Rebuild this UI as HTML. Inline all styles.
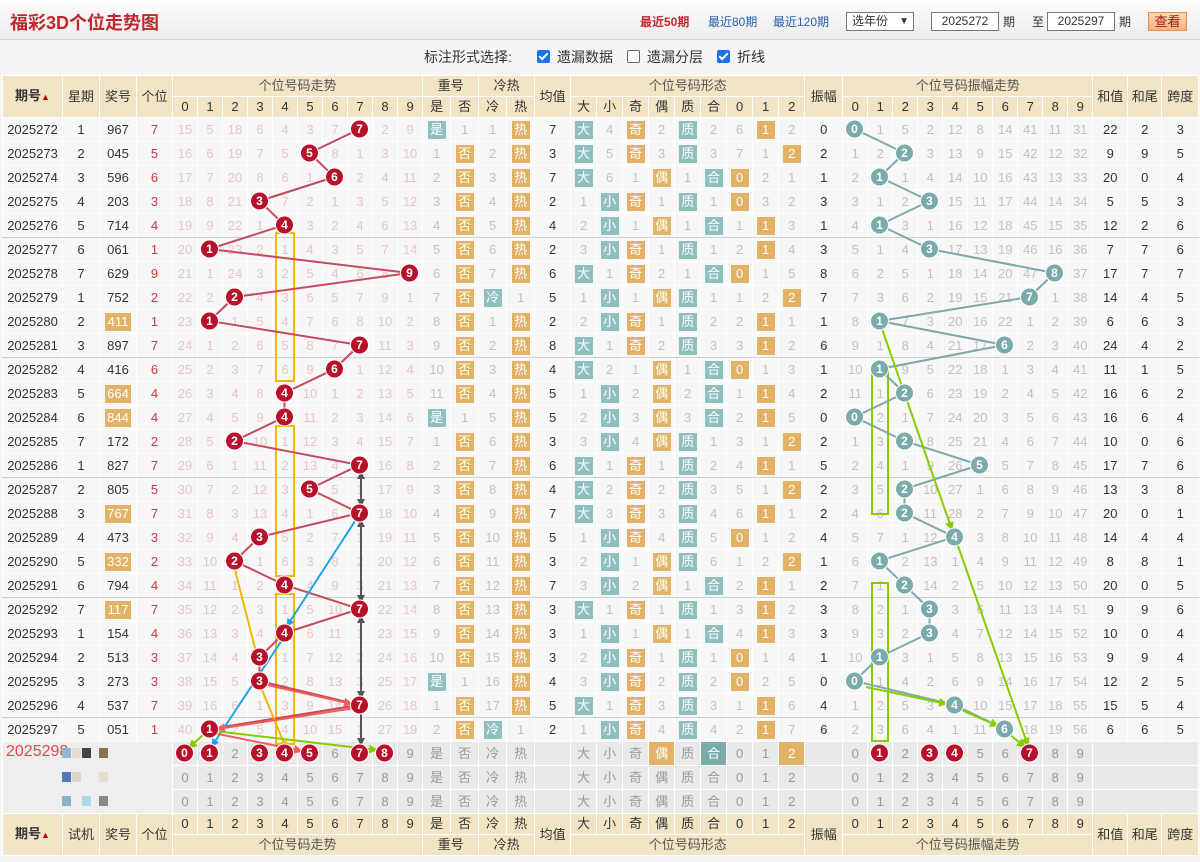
<!DOCTYPE html>
<html><head><meta charset="utf-8">
<style>
*{margin:0;padding:0;box-sizing:border-box}
body{width:1200px;height:862px;overflow:hidden;background:#f5f5f5;font-family:"Liberation Sans","Noto Sans CJK SC",sans-serif;font-size:13px;color:#333;position:relative}
#top{position:absolute;left:0;top:0;width:1200px;height:40px;background:linear-gradient(#fdfdfd,#ececec);border-bottom:1px solid #d8d8d8}
#top h1{position:absolute;left:10px;top:9px;font-size:18px;color:#c0272d;font-weight:bold}
.lk{position:absolute;top:13px;font-size:12px;color:#2a5ca8}
.box{position:absolute;top:12px;height:19px;border:1px solid #777;background:#fff;font-size:12px;line-height:17px;text-align:center}
#opt{position:absolute;top:47px;font-size:14px;color:#333}
.cb{position:absolute;top:50px;width:13px;height:13px;border-radius:2px}
.cb.on{background:#1a73e8}
.cb.on:after{content:"";position:absolute;left:4px;top:1px;width:3px;height:7px;border:solid #fff;border-width:0 2px 2px 0;transform:rotate(45deg)}
.cb.off{border:1px solid #666;background:#fff}
table{position:absolute;left:2px;top:75px;border-collapse:collapse;table-layout:fixed;width:1196px}
td{border:1px solid #fff;text-align:center;padding:0;white-space:nowrap;overflow:hidden;background:#f7f7f7;line-height:14px}
tr.h td{background:#f2e5c6;color:#333}
tr.h1{height:21px}tr.h2{height:21px}
tr.d{height:24px}
tr.d td{color:#c2c2c2}
tr.d td:nth-child(-n+3){color:#333}
tr.d td:nth-child(4){color:#c83a3a}
tr.d td:nth-child(n+5):nth-child(-n+14){color:#e8c6c6}
tr.d td:nth-child(19),tr.d td:nth-child(29),tr.d td:nth-child(n+40){color:#333}
tr.d td:nth-child(5),tr.d td:nth-child(15),tr.d td:nth-child(19),tr.d td:nth-child(20),tr.d td:nth-child(29),tr.d td:nth-child(30),tr.d td:nth-child(40){border-left:1px solid #dcdcdc}
tr.s td{border-bottom:1px solid #cfcfcf}
tr.p{height:24px}
tr.p td{background:#e9e9e9;color:#9a9a9a}
b{font-weight:normal;display:inline-block;color:#fff;height:18px;line-height:18px}
b.t{background:#8fbfbf;width:18px}
b.o{background:#e2b266;width:18px}
b.w{background:#e2b266;width:26px}
td.k{background:#7aabab!important;color:#fff!important}
td.y{background:#e2b266!important;color:#fff!important}
.sq{position:absolute;width:9px;height:10px}
</style></head><body>
<div id="top"><h1>福彩3D个位走势图</h1>
<span class="lk" style="left:640px;color:#c0272d;font-weight:bold">最近50期</span>
<span class="lk" style="left:708px">最近80期</span>
<span class="lk" style="left:773px">最近120期</span>
<div class="box" style="left:846px;width:68px;text-align:left;padding-left:5px">选年份 <span style="position:absolute;right:4px;font-size:10px">&#9660;</span></div>
<div class="box" style="left:931px;width:68px">2025272</div>
<span class="lk" style="left:1003px;color:#333">期</span>
<span class="lk" style="left:1032px;color:#333">至</span>
<div class="box" style="left:1047px;width:68px">2025297</div>
<span class="lk" style="left:1119px;color:#333">期</span>
<div class="box" style="left:1148px;width:39px;border-color:#e0905a;background:linear-gradient(#ffd9b0,#f7b27a);color:#a01818;font-size:13px">查看</div>
</div>
<span id="opt" style="left:424px">标注形式选择:</span>
<span class="cb on" style="left:537px"></span><span id="opt" style="left:557px">遗漏数据</span>
<span class="cb off" style="left:627px"></span><span id="opt" style="left:647px">遗漏分层</span>
<span class="cb on" style="left:717px"></span><span id="opt" style="left:737px">折线</span>

<table>
<colgroup><col style="width:60px"><col style="width:37px"><col style="width:37px"><col style="width:36px">
<col style="width:25px"><col style="width:25px"><col style="width:25px"><col style="width:25px"><col style="width:25px"><col style="width:25px"><col style="width:25px"><col style="width:25px"><col style="width:25px"><col style="width:25px">
<col style="width:28px"><col style="width:28px"><col style="width:28px"><col style="width:28px"><col style="width:36px">
<col style="width:26px"><col style="width:26px"><col style="width:26px"><col style="width:26px"><col style="width:26px"><col style="width:26px"><col style="width:26px"><col style="width:26px"><col style="width:26px">
<col style="width:38px">
<col style="width:25px"><col style="width:25px"><col style="width:25px"><col style="width:25px"><col style="width:25px"><col style="width:25px"><col style="width:25px"><col style="width:25px"><col style="width:25px"><col style="width:25px">
<col style="width:35px"><col style="width:34px"><col style="width:37px"></colgroup>
<tr class="h h1"><td rowspan="2"><span style="font-weight:bold">期号</span><span style="font-size:9px;color:#b00">&#9650;</span></td><td rowspan="2">星期</td><td rowspan="2">奖号</td><td rowspan="2">个位</td><td colspan="10" style="color:#555">个位号码走势</td><td colspan="2">重号</td><td colspan="2">冷热</td><td rowspan="2">均值</td><td colspan="9" style="color:#555">个位号码形态</td><td rowspan="2">振幅</td><td colspan="10" style="color:#555">个位号码振幅走势</td><td rowspan="2">和值</td><td rowspan="2">和尾</td><td rowspan="2">跨度</td></tr>
<tr class="h h2"><td>0<td>1<td>2<td>3<td>4<td>5<td>6<td>7<td>8<td>9<td>是<td>否<td>冷<td>热<td>大<td>小<td>奇<td>偶<td>质<td>合<td>0<td>1<td>2<td>0<td>1<td>2<td>3<td>4<td>5<td>6<td>7<td>8<td>9</tr>

<tr class="d"><td>2025272<td>1<td>967<td>7<td>15<td>5<td>18<td>6<td>4<td>3<td>7<td><td>2<td>9<td><b class=t>是</b><td>1<td>1<td><b class=o>热</b><td>7<td><b class=t>大</b><td>4<td><b class=o>奇</b><td>2<td><b class=t>质</b><td>2<td>6<td><b class=o>1</b><td>2<td>0<td><td>1<td>5<td>2<td>12<td>8<td>14<td>41<td>11<td>31<td>22<td>2<td>3</tr>
<tr class="d"><td>2025273<td>2<td>045<td>5<td>16<td>6<td>19<td>7<td>5<td><td>8<td>1<td>3<td>10<td>1<td><b class=o>否</b><td>2<td><b class=o>热</b><td>3<td><b class=t>大</b><td>5<td><b class=o>奇</b><td>3<td><b class=t>质</b><td>3<td>7<td>1<td><b class=o>2</b><td>2<td>1<td>2<td><td>3<td>13<td>9<td>15<td>42<td>12<td>32<td>9<td>9<td>5</tr>
<tr class="d"><td>2025274<td>3<td>596<td>6<td>17<td>7<td>20<td>8<td>6<td>1<td><td>2<td>4<td>11<td>2<td><b class=o>否</b><td>3<td><b class=o>热</b><td>7<td><b class=t>大</b><td>6<td>1<td><b class=o>偶</b><td>1<td><b class=t>合</b><td><b class=o>0</b><td>2<td>1<td>1<td>2<td><td>1<td>4<td>14<td>10<td>16<td>43<td>13<td>33<td>20<td>0<td>4</tr>
<tr class="d"><td>2025275<td>4<td>203<td>3<td>18<td>8<td>21<td><td>7<td>2<td>1<td>3<td>5<td>12<td>3<td><b class=o>否</b><td>4<td><b class=o>热</b><td>2<td>1<td><b class=t>小</b><td><b class=o>奇</b><td>1<td><b class=t>质</b><td>1<td><b class=o>0</b><td>3<td>2<td>3<td>3<td>1<td>2<td><td>15<td>11<td>17<td>44<td>14<td>34<td>5<td>5<td>3</tr>
<tr class="d s"><td>2025276<td>5<td>714<td>4<td>19<td>9<td>22<td>1<td><td>3<td>2<td>4<td>6<td>13<td>4<td><b class=o>否</b><td>5<td><b class=o>热</b><td>4<td>2<td><b class=t>小</b><td>1<td><b class=o>偶</b><td>1<td><b class=t>合</b><td>1<td><b class=o>1</b><td>3<td>1<td>4<td><td>3<td>1<td>16<td>12<td>18<td>45<td>15<td>35<td>12<td>2<td>6</tr>
<tr class="d"><td>2025277<td>6<td>061<td>1<td>20<td><td>23<td>2<td>1<td>4<td>3<td>5<td>7<td>14<td>5<td><b class=o>否</b><td>6<td><b class=o>热</b><td>2<td>3<td><b class=t>小</b><td><b class=o>奇</b><td>1<td><b class=t>质</b><td>1<td>2<td><b class=o>1</b><td>4<td>3<td>5<td>1<td>4<td><td>17<td>13<td>19<td>46<td>16<td>36<td>7<td>7<td>6</tr>
<tr class="d"><td>2025278<td>7<td>629<td>9<td>21<td>1<td>24<td>3<td>2<td>5<td>4<td>6<td>8<td><td>6<td><b class=o>否</b><td>7<td><b class=o>热</b><td>6<td><b class=t>大</b><td>1<td><b class=o>奇</b><td>2<td>1<td><b class=t>合</b><td><b class=o>0</b><td>1<td>5<td>8<td>6<td>2<td>5<td>1<td>18<td>14<td>20<td>47<td><td>37<td>17<td>7<td>7</tr>
<tr class="d"><td>2025279<td>1<td>752<td>2<td>22<td>2<td><td>4<td>3<td>6<td>5<td>7<td>9<td>1<td>7<td><b class=o>否</b><td><b class=t>冷</b><td>1<td>5<td>1<td><b class=t>小</b><td>1<td><b class=o>偶</b><td><b class=t>质</b><td>1<td>1<td>2<td><b class=o>2</b><td>7<td>7<td>3<td>6<td>2<td>19<td>15<td>21<td><td>1<td>38<td>14<td>4<td>5</tr>
<tr class="d"><td>2025280<td>2<td><b class=w>411</b><td>1<td>23<td><td>1<td>5<td>4<td>7<td>6<td>8<td>10<td>2<td>8<td><b class=o>否</b><td>1<td><b class=o>热</b><td>2<td>2<td><b class=t>小</b><td><b class=o>奇</b><td>1<td><b class=t>质</b><td>2<td>2<td><b class=o>1</b><td>1<td>1<td>8<td><td>7<td>3<td>20<td>16<td>22<td>1<td>2<td>39<td>6<td>6<td>3</tr>
<tr class="d s"><td>2025281<td>3<td>897<td>7<td>24<td>1<td>2<td>6<td>5<td>8<td>7<td><td>11<td>3<td>9<td><b class=o>否</b><td>2<td><b class=o>热</b><td>8<td><b class=t>大</b><td>1<td><b class=o>奇</b><td>2<td><b class=t>质</b><td>3<td>3<td><b class=o>1</b><td>2<td>6<td>9<td>1<td>8<td>4<td>21<td>17<td><td>2<td>3<td>40<td>24<td>4<td>2</tr>
<tr class="d"><td>2025282<td>4<td>416<td>6<td>25<td>2<td>3<td>7<td>6<td>9<td><td>1<td>12<td>4<td>10<td><b class=o>否</b><td>3<td><b class=o>热</b><td>4<td><b class=t>大</b><td>2<td>1<td><b class=o>偶</b><td>1<td><b class=t>合</b><td><b class=o>0</b><td>1<td>3<td>1<td>10<td><td>9<td>5<td>22<td>18<td>1<td>3<td>4<td>41<td>11<td>1<td>5</tr>
<tr class="d"><td>2025283<td>5<td><b class=w>664</b><td>4<td>26<td>3<td>4<td>8<td><td>10<td>1<td>2<td>13<td>5<td>11<td><b class=o>否</b><td>4<td><b class=o>热</b><td>5<td>1<td><b class=t>小</b><td>2<td><b class=o>偶</b><td>2<td><b class=t>合</b><td>1<td><b class=o>1</b><td>4<td>2<td>11<td>1<td><td>6<td>23<td>19<td>2<td>4<td>5<td>42<td>16<td>6<td>2</tr>
<tr class="d"><td>2025284<td>6<td><b class=w>844</b><td>4<td>27<td>4<td>5<td>9<td><td>11<td>2<td>3<td>14<td>6<td><b class=t>是</b><td>1<td>5<td><b class=o>热</b><td>5<td>2<td><b class=t>小</b><td>3<td><b class=o>偶</b><td>3<td><b class=t>合</b><td>2<td><b class=o>1</b><td>5<td>0<td><td>2<td>1<td>7<td>24<td>20<td>3<td>5<td>6<td>43<td>16<td>6<td>4</tr>
<tr class="d"><td>2025285<td>7<td>172<td>2<td>28<td>5<td><td>10<td>1<td>12<td>3<td>4<td>15<td>7<td>1<td><b class=o>否</b><td>6<td><b class=o>热</b><td>3<td>3<td><b class=t>小</b><td>4<td><b class=o>偶</b><td><b class=t>质</b><td>1<td>3<td>1<td><b class=o>2</b><td>2<td>1<td>3<td><td>8<td>25<td>21<td>4<td>6<td>7<td>44<td>10<td>0<td>6</tr>
<tr class="d s"><td>2025286<td>1<td>827<td>7<td>29<td>6<td>1<td>11<td>2<td>13<td>4<td><td>16<td>8<td>2<td><b class=o>否</b><td>7<td><b class=o>热</b><td>6<td><b class=t>大</b><td>1<td><b class=o>奇</b><td>1<td><b class=t>质</b><td>2<td>4<td><b class=o>1</b><td>1<td>5<td>2<td>4<td>1<td>9<td>26<td><td>5<td>7<td>8<td>45<td>17<td>7<td>6</tr>
<tr class="d"><td>2025287<td>2<td>805<td>5<td>30<td>7<td>2<td>12<td>3<td><td>5<td>1<td>17<td>9<td>3<td><b class=o>否</b><td>8<td><b class=o>热</b><td>4<td><b class=t>大</b><td>2<td><b class=o>奇</b><td>2<td><b class=t>质</b><td>3<td>5<td>1<td><b class=o>2</b><td>2<td>3<td>5<td><td>10<td>27<td>1<td>6<td>8<td>9<td>46<td>13<td>3<td>8</tr>
<tr class="d"><td>2025288<td>3<td><b class=w>767</b><td>7<td>31<td>8<td>3<td>13<td>4<td>1<td>6<td><td>18<td>10<td>4<td><b class=o>否</b><td>9<td><b class=o>热</b><td>7<td><b class=t>大</b><td>3<td><b class=o>奇</b><td>3<td><b class=t>质</b><td>4<td>6<td><b class=o>1</b><td>1<td>2<td>4<td>6<td><td>11<td>28<td>2<td>7<td>9<td>10<td>47<td>20<td>0<td>1</tr>
<tr class="d"><td>2025289<td>4<td>473<td>3<td>32<td>9<td>4<td><td>5<td>2<td>7<td>1<td>19<td>11<td>5<td><b class=o>否</b><td>10<td><b class=o>热</b><td>5<td>1<td><b class=t>小</b><td><b class=o>奇</b><td>4<td><b class=t>质</b><td>5<td><b class=o>0</b><td>1<td>2<td>4<td>5<td>7<td>1<td>12<td><td>3<td>8<td>10<td>11<td>48<td>14<td>4<td>4</tr>
<tr class="d"><td>2025290<td>5<td><b class=w>332</b><td>2<td>33<td>10<td><td>1<td>6<td>3<td>8<td>2<td>20<td>12<td>6<td><b class=o>否</b><td>11<td><b class=o>热</b><td>3<td>2<td><b class=t>小</b><td>1<td><b class=o>偶</b><td><b class=t>质</b><td>6<td>1<td>2<td><b class=o>2</b><td>1<td>6<td><td>2<td>13<td>1<td>4<td>9<td>11<td>12<td>49<td>8<td>8<td>1</tr>
<tr class="d s"><td>2025291<td>6<td>794<td>4<td>34<td>11<td>1<td>2<td><td>4<td>9<td>3<td>21<td>13<td>7<td><b class=o>否</b><td>12<td><b class=o>热</b><td>7<td>3<td><b class=t>小</b><td>2<td><b class=o>偶</b><td>1<td><b class=t>合</b><td>2<td><b class=o>1</b><td>1<td>2<td>7<td>1<td><td>14<td>2<td>5<td>10<td>12<td>13<td>50<td>20<td>0<td>5</tr>
<tr class="d"><td>2025292<td>7<td><b class=w>117</b><td>7<td>35<td>12<td>2<td>3<td>1<td>5<td>10<td><td>22<td>14<td>8<td><b class=o>否</b><td>13<td><b class=o>热</b><td>3<td><b class=t>大</b><td>1<td><b class=o>奇</b><td>1<td><b class=t>质</b><td>1<td>3<td><b class=o>1</b><td>2<td>3<td>8<td>2<td>1<td><td>3<td>6<td>11<td>13<td>14<td>51<td>9<td>9<td>6</tr>
<tr class="d"><td>2025293<td>1<td>154<td>4<td>36<td>13<td>3<td>4<td><td>6<td>11<td>1<td>23<td>15<td>9<td><b class=o>否</b><td>14<td><b class=o>热</b><td>3<td>1<td><b class=t>小</b><td>1<td><b class=o>偶</b><td>1<td><b class=t>合</b><td>4<td><b class=o>1</b><td>3<td>3<td>9<td>3<td>2<td><td>4<td>7<td>12<td>14<td>15<td>52<td>10<td>0<td>4</tr>
<tr class="d"><td>2025294<td>2<td>513<td>3<td>37<td>14<td>4<td><td>1<td>7<td>12<td>2<td>24<td>16<td>10<td><b class=o>否</b><td>15<td><b class=o>热</b><td>3<td>2<td><b class=t>小</b><td><b class=o>奇</b><td>1<td><b class=t>质</b><td>1<td><b class=o>0</b><td>1<td>4<td>1<td>10<td><td>3<td>1<td>5<td>8<td>13<td>15<td>16<td>53<td>9<td>9<td>4</tr>
<tr class="d"><td>2025295<td>3<td>273<td>3<td>38<td>15<td>5<td><td>2<td>8<td>13<td>3<td>25<td>17<td><b class=t>是</b><td>1<td>16<td><b class=o>热</b><td>4<td>3<td><b class=t>小</b><td><b class=o>奇</b><td>2<td><b class=t>质</b><td>2<td><b class=o>0</b><td>2<td>5<td>0<td><td>1<td>4<td>2<td>6<td>9<td>14<td>16<td>17<td>54<td>12<td>2<td>5</tr>
<tr class="d s"><td>2025296<td>4<td>537<td>7<td>39<td>16<td>6<td>1<td>3<td>9<td>14<td><td>26<td>18<td>1<td><b class=o>否</b><td>17<td><b class=o>热</b><td>5<td><b class=t>大</b><td>1<td><b class=o>奇</b><td>3<td><b class=t>质</b><td>3<td>1<td><b class=o>1</b><td>6<td>4<td>1<td>2<td>5<td>3<td><td>10<td>15<td>17<td>18<td>55<td>15<td>5<td>4</tr>
<tr class="d"><td>2025297<td>5<td>051<td>1<td>40<td><td>2<td>5<td>4<td>10<td>15<td>1<td>27<td>19<td>2<td><b class=o>否</b><td><b class=t>冷</b><td>1<td>2<td>1<td><b class=t>小</b><td><b class=o>奇</b><td>4<td><b class=t>质</b><td>4<td>2<td><b class=o>1</b><td>7<td>6<td>2<td>3<td>6<td>4<td>1<td>11<td><td>18<td>19<td>56<td>6<td>6<td>5</tr>

<tr class="p"><td colspan="4" rowspan="3" style="background:#eeeeee;vertical-align:top;text-align:left;position:relative"><span style="position:absolute;left:3px;top:3px;font-size:16px;color:#e8474f">2025298</span></td><td><td><td>2<td><td><td><td>6<td><td><td>9<td>是<td>否<td>冷<td>热<td><td>大<td>小<td>奇<td class="y">偶<td>质<td class="k">合<td>0<td>1<td class="y">2<td><td>0<td><td>2<td><td><td>5<td>6<td><td>8<td>9<td colspan="3"></tr>
<tr class="p"><td>0<td>1<td>2<td>3<td>4<td>5<td>6<td>7<td>8<td>9<td>是<td>否<td>冷<td>热<td><td>大<td>小<td>奇<td>偶<td>质<td>合<td>0<td>1<td>2<td><td>0<td>1<td>2<td>3<td>4<td>5<td>6<td>7<td>8<td>9<td colspan="3"></tr>
<tr class="p"><td>0<td>1<td>2<td>3<td>4<td>5<td>6<td>7<td>8<td>9<td>是<td>否<td>冷<td>热<td><td>大<td>小<td>奇<td>偶<td>质<td>合<td>0<td>1<td>2<td><td>0<td>1<td>2<td>3<td>4<td>5<td>6<td>7<td>8<td>9<td colspan="3"></tr>

<tr class="h h1"><td rowspan="2"><span style="font-weight:bold">期号</span><span style="font-size:9px;color:#b00">&#9650;</span></td><td rowspan="2">试机</td><td rowspan="2">奖号</td><td rowspan="2">个位</td><td>0<td>1<td>2<td>3<td>4<td>5<td>6<td>7<td>8<td>9<td>是<td>否<td>冷<td>热<td rowspan="2">均值</td><td>大<td>小<td>奇<td>偶<td>质<td>合<td>0<td>1<td>2<td rowspan="2">振幅</td><td>0<td>1<td>2<td>3<td>4<td>5<td>6<td>7<td>8<td>9<td rowspan="2">和值</td><td rowspan="2">和尾</td><td rowspan="2">跨度</td></tr>
<tr class="h h2"><td colspan="10" style="color:#555">个位号码走势</td><td colspan="2">重号</td><td colspan="2">冷热</td><td colspan="9" style="color:#555">个位号码形态</td><td colspan="10" style="color:#555">个位号码振幅走势</td></tr>
</table>

<div class="sq" style="left:62px;top:748px;background:#8cb8d8"></div><div class="sq" style="left:72px;top:748px;background:#e6ddd2"></div><div class="sq" style="left:82px;top:748px;background:#444"></div><div class="sq" style="left:99px;top:748px;background:#8b7150"></div>
<div class="sq" style="left:62px;top:772px;background:#4f7cb5"></div><div class="sq" style="left:72px;top:772px;background:#e0d5cc"></div><div class="sq" style="left:99px;top:772px;background:#e6ddd2"></div>
<div class="sq" style="left:62px;top:796px;background:#86b4c8"></div><div class="sq" style="left:72px;top:796px;background:#eee"></div><div class="sq" style="left:82px;top:796px;background:#acdbe4"></div><div class="sq" style="left:99px;top:796px;background:#888"></div>

<svg width="1200" height="862" style="position:absolute;left:0;top:0" font-family="Liberation Sans,sans-serif">
<defs>
<marker id="ay" markerWidth="8" markerHeight="8" refX="7" refY="4" orient="auto" markerUnits="userSpaceOnUse"><path d="M0,0 L8,4 L0,8 Z" fill="#f5b800"/></marker>
<marker id="ab" markerWidth="8" markerHeight="8" refX="7" refY="4" orient="auto" markerUnits="userSpaceOnUse"><path d="M0,0 L8,4 L0,8 Z" fill="#19a4ec"/></marker>
<marker id="ak" markerWidth="8" markerHeight="8" refX="7" refY="4" orient="auto-start-reverse" markerUnits="userSpaceOnUse"><path d="M0,0 L8,4 L0,8 Z" fill="#555"/></marker>
<marker id="ar" markerWidth="9" markerHeight="9" refX="8" refY="4.5" orient="auto" markerUnits="userSpaceOnUse"><path d="M0,0 L9,4.5 L0,9 Z" fill="#f25c5c"/></marker>
<marker id="ag" markerWidth="9" markerHeight="9" refX="8" refY="4.5" orient="auto" markerUnits="userSpaceOnUse"><path d="M0,0 L9,4.5 L0,9 Z" fill="#88cc00"/></marker>
</defs>
<g fill="none" stroke="#f5b800" stroke-width="2">
<rect x="276" y="233" width="18" height="148"/><rect x="276" y="426" width="18" height="150"/><rect x="276" y="594" width="18" height="150"/>
</g>
<g fill="none" stroke="#88cc00" stroke-width="2">
<rect x="872" y="366" width="16" height="148"/><rect x="872" y="583" width="16" height="158"/>
</g>
<polyline fill="none" stroke="#c84a5c" stroke-width="2" points="359.5,129 309.5,153 334.5,177 259.5,201 284.5,225 209.5,249 409.5,273 234.5,297 209.5,321 359.5,345 334.5,369 284.5,393 284.5,417 234.5,441 359.5,465 309.5,489 359.5,513 259.5,537 234.5,561 284.5,585 359.5,609 284.5,633 259.5,657 259.5,681 359.5,705 209.5,729"/>
<polyline fill="none" stroke="#7fa9a9" stroke-width="2" points="854.5,129 904.5,153 879.5,177 929.5,201 879.5,225 929.5,249 1054.5,273 1029.5,297 879.5,321 1004.5,345 879.5,369 904.5,393 854.5,417 904.5,441 979.5,465 904.5,489 904.5,513 954.5,537 879.5,561 904.5,585 929.5,609 929.5,633 879.5,657 854.5,681 954.5,705 1004.5,729"/>
<g stroke-width="2" fill="none">
<line x1="234" y1="566" x2="257" y2="656" stroke="#f5b800" marker-end="url(#ay)"/>
<line x1="262" y1="690" x2="286" y2="748" stroke="#f5b800" marker-end="url(#ay)"/>
<line x1="357" y1="518" x2="287" y2="626" stroke="#19a4ec" marker-end="url(#ab)"/>
<line x1="282" y1="640" x2="212" y2="746" stroke="#19a4ec" marker-end="url(#ab)"/>
<line x1="361" y1="472" x2="361" y2="506" stroke="#555" marker-start="url(#ak)" marker-end="url(#ak)"/>
<line x1="361" y1="520" x2="361" y2="602" stroke="#555" marker-start="url(#ak)" marker-end="url(#ak)"/>
<line x1="361" y1="616" x2="361" y2="698" stroke="#555" marker-start="url(#ak)" marker-end="url(#ak)"/>
<line x1="361" y1="712" x2="361" y2="745" stroke="#555" marker-end="url(#ak)"/>
<line x1="263" y1="684" x2="352" y2="704" stroke="#f25c5c" marker-end="url(#ar)"/>
<line x1="355" y1="708" x2="217" y2="729" stroke="#f25c5c" marker-end="url(#ar)"/>
<line x1="213" y1="733" x2="302" y2="751" stroke="#f25c5c" marker-end="url(#ar)"/>
<line x1="205" y1="733" x2="189" y2="748" stroke="#88cc00" marker-end="url(#ag)"/>
<line x1="214" y1="731" x2="377" y2="750" stroke="#88cc00" marker-end="url(#ag)"/>
<line x1="881" y1="326" x2="952" y2="530" stroke="#88cc00" marker-end="url(#ag)"/>
<line x1="957" y1="543" x2="1028" y2="746" stroke="#88cc00" marker-end="url(#ag)"/>
<line x1="866" y1="687" x2="947" y2="704" stroke="#88cc00" marker-end="url(#ag)"/>
<line x1="959" y1="709" x2="998" y2="726" stroke="#88cc00" marker-end="url(#ag)"/>
<line x1="1009" y1="734" x2="1025" y2="747" stroke="#88cc00" marker-end="url(#ag)"/>
</g>
<g fill="#b8102a" stroke="#fff" stroke-width="1">
<circle cx="359.5" cy="129" r="9"/><circle cx="309.5" cy="153" r="9"/><circle cx="334.5" cy="177" r="9"/><circle cx="259.5" cy="201" r="9"/><circle cx="284.5" cy="225" r="9"/><circle cx="209.5" cy="249" r="9"/><circle cx="409.5" cy="273" r="9"/><circle cx="234.5" cy="297" r="9"/><circle cx="209.5" cy="321" r="9"/><circle cx="359.5" cy="345" r="9"/><circle cx="334.5" cy="369" r="9"/><circle cx="284.5" cy="393" r="9"/><circle cx="284.5" cy="417" r="9"/><circle cx="234.5" cy="441" r="9"/><circle cx="359.5" cy="465" r="9"/><circle cx="309.5" cy="489" r="9"/><circle cx="359.5" cy="513" r="9"/><circle cx="259.5" cy="537" r="9"/><circle cx="234.5" cy="561" r="9"/><circle cx="284.5" cy="585" r="9"/><circle cx="359.5" cy="609" r="9"/><circle cx="284.5" cy="633" r="9"/><circle cx="259.5" cy="657" r="9"/><circle cx="259.5" cy="681" r="9"/><circle cx="359.5" cy="705" r="9"/><circle cx="209.5" cy="729" r="9"/>
<circle cx="184.5" cy="753" r="9"/><circle cx="209.5" cy="753" r="9"/><circle cx="259.5" cy="753" r="9"/><circle cx="284.5" cy="753" r="9"/><circle cx="309.5" cy="753" r="9"/><circle cx="359.5" cy="753" r="9"/><circle cx="384.5" cy="753" r="9"/>
<circle cx="879.5" cy="753" r="9"/><circle cx="929.5" cy="753" r="9"/><circle cx="954.5" cy="753" r="9"/><circle cx="1029.5" cy="753" r="9"/>
</g>
<g fill="#7aabab" stroke="#fff" stroke-width="1">
<circle cx="854.5" cy="129" r="9"/><circle cx="904.5" cy="153" r="9"/><circle cx="879.5" cy="177" r="9"/><circle cx="929.5" cy="201" r="9"/><circle cx="879.5" cy="225" r="9"/><circle cx="929.5" cy="249" r="9"/><circle cx="1054.5" cy="273" r="9"/><circle cx="1029.5" cy="297" r="9"/><circle cx="879.5" cy="321" r="9"/><circle cx="1004.5" cy="345" r="9"/><circle cx="879.5" cy="369" r="9"/><circle cx="904.5" cy="393" r="9"/><circle cx="854.5" cy="417" r="9"/><circle cx="904.5" cy="441" r="9"/><circle cx="979.5" cy="465" r="9"/><circle cx="904.5" cy="489" r="9"/><circle cx="904.5" cy="513" r="9"/><circle cx="954.5" cy="537" r="9"/><circle cx="879.5" cy="561" r="9"/><circle cx="904.5" cy="585" r="9"/><circle cx="929.5" cy="609" r="9"/><circle cx="929.5" cy="633" r="9"/><circle cx="879.5" cy="657" r="9"/><circle cx="854.5" cy="681" r="9"/><circle cx="954.5" cy="705" r="9"/><circle cx="1004.5" cy="729" r="9"/>
</g>
<g fill="#fff" font-size="12" font-weight="bold" text-anchor="middle">
<text x="359.5" y="133">7</text><text x="309.5" y="157">5</text><text x="334.5" y="181">6</text><text x="259.5" y="205">3</text><text x="284.5" y="229">4</text><text x="209.5" y="253">1</text><text x="409.5" y="277">9</text><text x="234.5" y="301">2</text><text x="209.5" y="325">1</text><text x="359.5" y="349">7</text><text x="334.5" y="373">6</text><text x="284.5" y="397">4</text><text x="284.5" y="421">4</text><text x="234.5" y="445">2</text><text x="359.5" y="469">7</text><text x="309.5" y="493">5</text><text x="359.5" y="517">7</text><text x="259.5" y="541">3</text><text x="234.5" y="565">2</text><text x="284.5" y="589">4</text><text x="359.5" y="613">7</text><text x="284.5" y="637">4</text><text x="259.5" y="661">3</text><text x="259.5" y="685">3</text><text x="359.5" y="709">7</text><text x="209.5" y="733">1</text>
<text x="184.5" y="757">0</text><text x="209.5" y="757">1</text><text x="259.5" y="757">3</text><text x="284.5" y="757">4</text><text x="309.5" y="757">5</text><text x="359.5" y="757">7</text><text x="384.5" y="757">8</text>
<text x="879.5" y="757">1</text><text x="929.5" y="757">3</text><text x="954.5" y="757">4</text><text x="1029.5" y="757">7</text>
<text x="854.5" y="133">0</text><text x="904.5" y="157">2</text><text x="879.5" y="181">1</text><text x="929.5" y="205">3</text><text x="879.5" y="229">1</text><text x="929.5" y="253">3</text><text x="1054.5" y="277">8</text><text x="1029.5" y="301">7</text><text x="879.5" y="325">1</text><text x="1004.5" y="349">6</text><text x="879.5" y="373">1</text><text x="904.5" y="397">2</text><text x="854.5" y="421">0</text><text x="904.5" y="445">2</text><text x="979.5" y="469">5</text><text x="904.5" y="493">2</text><text x="904.5" y="517">2</text><text x="954.5" y="541">4</text><text x="879.5" y="565">1</text><text x="904.5" y="589">2</text><text x="929.5" y="613">3</text><text x="929.5" y="637">3</text><text x="879.5" y="661">1</text><text x="854.5" y="685">0</text><text x="954.5" y="709">4</text><text x="1004.5" y="733">6</text>
</g>
</svg>
</body></html>
